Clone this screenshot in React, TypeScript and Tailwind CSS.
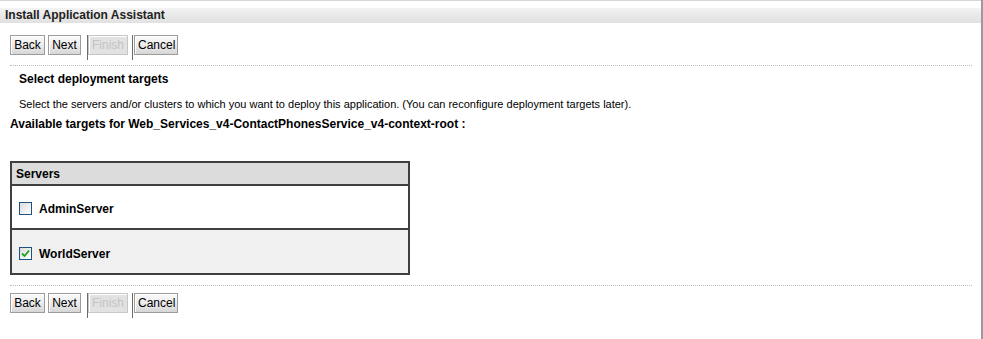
import React, { useState } from 'react';

const base =
  "h-[20px] px-[3px] text-[12px] leading-none font-['Liberation_Sans',Arial,sans-serif] border shadow-[inset_1px_1px_0_#ffffff]";
const active = `${base} text-black border-[#9c9c9c] bg-gradient-to-b from-[#fbfbfb] via-[#ececec] to-[#d6d6d6]`;
const disabled = `${base} text-[#c4c4c4] border-[#c6c6c6] bg-[#e2e2e2]`;

const ButtonBar: React.FC = () => (
  <div className="flex items-start h-[26px] pl-[10px]">
    <button className={`${active} w-[35px]`}>Back</button>
    <button className={`${active} w-[33px] ml-[3px]`}>Next</button>
    <div className="ml-[6px] w-px h-[25px] bg-[#6b6b6b]" />
    <button disabled className={`${disabled} w-[40px]`}>
      Finish
    </button>
    <div className="ml-[4px] w-px h-[25px] bg-[#6b6b6b]" />
    <button className={`${active} w-[44px] ml-px`}>Cancel</button>
  </div>
);

const Checkbox: React.FC<{ checked: boolean; onChange: () => void }> = ({ checked, onChange }) => (
  <span
    onClick={onChange}
    className="w-[13px] h-[13px] border border-[#1c5180] bg-gradient-to-br from-[#dcdcdc] to-[#ffffff] flex items-center justify-center shrink-0"
  >
    {checked && (
      <svg width="9" height="9" viewBox="0 0 9 9">
        <path d="M1 4.5 L3.5 7 L8 1.5" fill="none" stroke="#21a121" strokeWidth="1.8" />
      </svg>
    )}
  </span>
);

export default function App() {
  const [servers, setServers] = useState([
    { name: 'AdminServer', checked: false },
    { name: 'WorldServer', checked: true },
  ]);

  const toggle = (i: number) =>
    setServers(servers.map((s, j) => (j === i ? { ...s, checked: !s.checked } : s)));

  return (
    <div className="w-[983px] h-[339px] bg-white overflow-hidden border-r-2 border-[#9a9a9a] font-['Liberation_Sans',Tahoma,sans-serif] text-black">
      <div className="h-px bg-[#d6d6d6]" />
      <div className="mt-[7px] h-[15px] bg-gradient-to-b from-[#f3f3f3] via-[#e9e9e9] to-[#e1e1e1] pl-[5px] text-[12px] font-bold leading-[15px] text-[#222]">
        Install Application Assistant
      </div>

      <div className="mt-[12px]">
        <ButtonBar />
      </div>

      <div className="mt-[4px] mx-[10px] w-[962px] border-t border-dotted border-[#bdbdbd]" />

      <div className="pl-[19px] mt-[6px] text-[12px] font-bold leading-[14px]">Select deployment targets</div>
      <div className="pl-[19px] mt-[11px] text-[11px] leading-[14px]">
        Select the servers and/or clusters to which you want to deploy this application. (You can reconfigure deployment targets later).
      </div>
      <div className="pl-[10px] mt-[6px] text-[12px] font-bold leading-[14px]">
        Available targets for Web_Services_v4-ContactPhonesService_v4-context-root :
      </div>

      <div className="ml-[10px] mt-[30px] w-[400px] border-2 border-[#3f3f3f]">
        <div className="h-[23px] bg-[#dcdcdc] border-b-2 border-[#3f3f3f] pl-[4px] flex items-center text-[12px] font-bold">
          Servers
        </div>
        {servers.map((s, i) => (
          <div
            key={s.name}
            className={`flex items-center pl-[7px] gap-[7px] text-[12px] font-bold ${
              i === 0 ? 'h-[44px] pt-[3px] bg-white border-b-2 border-[#3f3f3f]' : 'h-[43px] pt-[4px] bg-[#f0f0f0]'
            }`}
          >
            <Checkbox checked={s.checked} onChange={() => toggle(i)} />
            <span>{s.name}</span>
          </div>
        ))}
      </div>

      <div className="mt-[10px] mx-[10px] w-[962px] border-t border-dotted border-[#bdbdbd]" />
      <div className="mt-[7px]">
        <ButtonBar />
      </div>
    </div>
  );
}
